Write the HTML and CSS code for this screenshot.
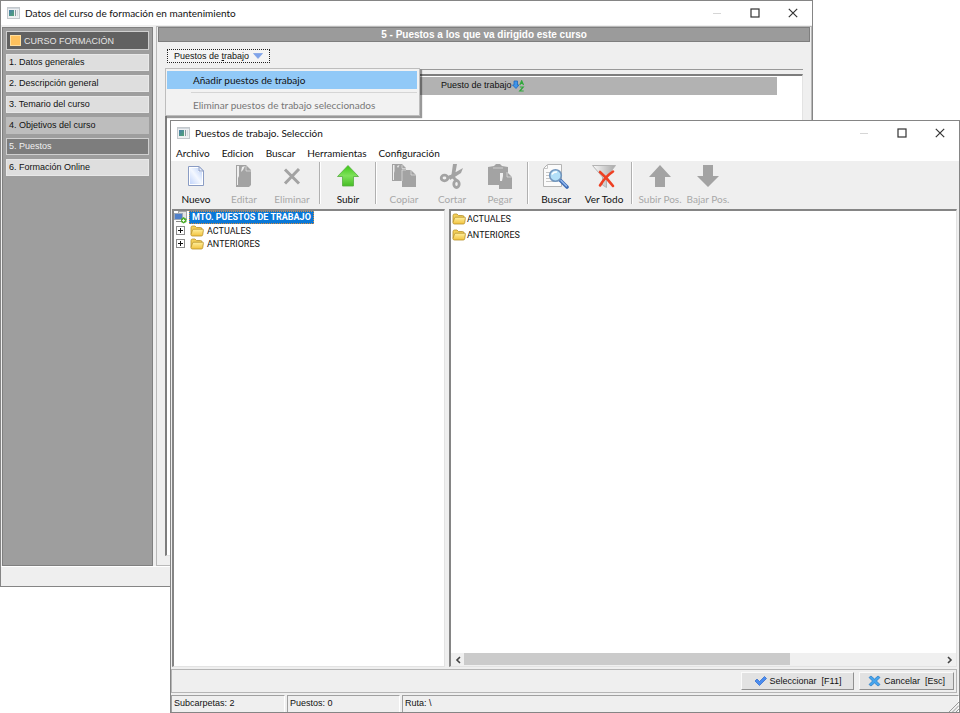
FILE: index.html
```html
<!DOCTYPE html>
<html lang="es">
<head>
    <meta charset="UTF-8">
    <meta name="viewport" content="width=device-width, initial-scale=1.0">
    <title>Datos del curso de formación en mantenimiento</title>
    <link rel="stylesheet" href="styles.css">
</head>
<body>
    <!-- Shared icons -->
    <svg class="defs" width="0" height="0" aria-hidden="true">
        <defs>
            <linearGradient id="folderFill" x1="0" y1="0" x2="0" y2="1">
                <stop offset="0" stop-color="#fff0a0"/>
                <stop offset="1" stop-color="#f2c23c"/>
            </linearGradient>
            <linearGradient id="appFill" x1="0" y1="0" x2="1" y2="1">
                <stop offset="0" stop-color="#4a7fae"/>
                <stop offset="1" stop-color="#4fa372"/>
            </linearGradient>
            <symbol id="app" viewBox="0 0 13 12">
                <rect x="0.5" y="0.5" width="12" height="11" fill="#eef0f2" stroke="#c3c8cc"/>
                <rect x="1" y="1" width="11" height="1" fill="#cfd6dc"/>
                <rect x="2" y="3" width="5" height="6" fill="url(#appFill)"/>
                <rect x="8" y="3" width="1" height="6" fill="#8b979e"/>
                <rect x="10" y="3" width="1" height="6" fill="#d5dade"/>
            </symbol>
            <symbol id="folder" viewBox="0 0 14 12">
                <path d="M1 9.500V2.500Q1 1 2.500 1H5L6.500 2.500H10.500Q12 2.500 12 4V5" fill="#f3cf58" stroke="#b8922c" stroke-width="0.800"/>
                <path d="M1 9.500L2.500 5Q2.800 4.200 3.700 4.200H12.500Q13.600 4.200 13.400 5.200L12.700 9.800Q12.500 11 11.300 11H2.300Q1 11 1 9.500Z" fill="url(#folderFill)" stroke="#b8922c" stroke-width="0.800"/>
            </symbol>
            <symbol id="plus" viewBox="0 0 9 9">
                <rect x="0.500" y="0.500" width="8" height="8" fill="#fff" stroke="#8c8c8c"/>
                <path d="M2 4.500H7M4.500 2V7" stroke="#111"/>
            </symbol>
            <symbol id="minimize" viewBox="0 0 10 10"><path d="M1 5.500H9" stroke="#d6d6d6"/></symbol>
            <symbol id="maximize" viewBox="0 0 10 10"><rect x="1" y="1" width="8" height="8" fill="none" stroke="#333" stroke-width="1.200"/></symbol>
            <symbol id="close" viewBox="0 0 10 10"><path d="M0.800 0.800L9.200 9.200M9.200 0.800L0.800 9.200" stroke="#333" stroke-width="1.200"/></symbol>
        </defs>
    </svg>

    <main class="desktop">
        <section class="window course">
            <header class="title-bar">
                <svg class="app-icon"><use href="#app"/></svg>
                <h1>Datos del curso de formación en mantenimiento</h1>
                <div class="window-buttons">
                    <button aria-label="Minimizar" disabled><svg><use href="#minimize"/></svg></button>
                    <button aria-label="Maximizar"><svg><use href="#maximize"/></svg></button>
                    <button aria-label="Cerrar"><svg><use href="#close"/></svg></button>
                </div>
            </header>

            <div class="course-body">
                <nav class="sidebar">
                    <h2>CURSO FORMACIÓN</h2>
                    <a href="#">1. Datos generales</a>
                    <a href="#">2. Descripción general</a>
                    <a href="#">3. Temario del curso</a>
                    <a href="#" class="hover">4. Objetivos del curso</a>
                    <a href="#" class="active">5. Puestos</a>
                    <a href="#">6. Formación Online</a>
                </nav>

                <div class="panel">
                    <h2 class="panel-title">5 - Puestos a los que va dirigido este curso</h2>
                    <div class="panel-tools">
                        <button class="menu-button">
                            <span>Puestos de <u>t</u>rabajo</span>
                            <svg width="10" height="6" viewBox="0 0 10 6"><path d="M0.500 0.500H9.500L5 5.500Z" fill="#7fa3ea" stroke="#7298e2" stroke-width="0.600"/></svg>
                        </button>
                        <div class="popup" role="menu">
                            <button role="menuitem" class="selected">Añadir puestos de trabajo</button>
                            <hr>
                            <button role="menuitem" disabled>Eliminar puestos de trabajo seleccionados</button>
                        </div>
                    </div>
                    <div class="grid-box">
                        <table>
                            <tr>
                                <th>
                                    Puesto de trabajo
                                    <svg width="13" height="12" viewBox="0 0 13 12">
                                        <path d="M2 1H5.500V5H7L4 8.500L0.500 5H2Z" fill="#3f95ea" stroke="#1f66bd" stroke-width="0.800"/>
                                        <path d="M7.800 5L9.700 0.800L11.500 5M8.300 3.500H11M7.800 7H11.200L7.800 11H11.700" fill="none" stroke="#2fa83a" stroke-width="1.200"/>
                                    </svg>
                                </th>
                            </tr>
                        </table>
                    </div>
                </div>
            </div>
            <footer class="course-footer"></footer>
        </section>

        <section class="window picker">
            <header class="title-bar">
                <svg class="app-icon"><use href="#app"/></svg>
                <h1>Puestos de trabajo. Selección</h1>
                <div class="window-buttons">
                    <button aria-label="Minimizar" disabled><svg><use href="#minimize"/></svg></button>
                    <button aria-label="Maximizar"><svg><use href="#maximize"/></svg></button>
                    <button aria-label="Cerrar"><svg><use href="#close"/></svg></button>
                </div>
            </header>

            <nav class="menu-bar">
                <button>Archivo</button>
                <button>Edicion</button>
                <button>Buscar</button>
                <button>Herramientas</button>
                <button>Configuración</button>
            </nav>

            <div class="toolbar">
                <button>
                    <svg viewBox="0 0 26 26">
                        <defs><linearGradient id="pageFill" x1="1" y1="0" x2="0" y2="1"><stop offset="0" stop-color="#b9cffa"/><stop offset="0.500" stop-color="#f4f8ff"/><stop offset="1" stop-color="#c3d5fb"/></linearGradient></defs>
                        <path d="M5.500 3.500H16L20.500 8V22.500H5.500Z" fill="#fff" stroke="#8a9cc4"/>
                        <path d="M7 5H15.500V9H19V21H7Z" fill="url(#pageFill)"/>
                        <path d="M16 3.500V8H20.500Z" fill="#eaf0fd" stroke="#8a9cc4"/>
                    </svg>
                    Nuevo
                </button>
                <button disabled>
                    <svg viewBox="0 0 26 26">
                        <path d="M5 2H15L20 7V22L18 24H5Z" fill="#a3a3a3"/>
                        <path d="M6 3H8V13L7 15V22H6ZM11 4L14 3L12 7L10 9Z" fill="#efefef"/>
                        <path d="M15 3V8H20" fill="none" stroke="#efefef" stroke-width="0.600"/>
                    </svg>
                    Editar
                </button>
                <button disabled>
                    <svg viewBox="0 0 26 26"><path d="M6 6.500L20 20.500M20 6L6 20.500" fill="none" stroke="#a3a3a3" stroke-width="3"/></svg>
                    Eliminar
                </button>
                <span class="divider"></span>
                <button>
                    <svg viewBox="0 0 26 26">
                        <defs><linearGradient id="upFill" x1="0" y1="0" x2="0" y2="1"><stop offset="0" stop-color="#3cc814"/><stop offset="0.500" stop-color="#7fe25a"/><stop offset="1" stop-color="#46bd25"/></linearGradient></defs>
                        <path d="M13 2.500L23.500 13.500H18.500V23H7.500V13.500H2.500Z" fill="url(#upFill)" stroke="#55ad40" stroke-width="0.800"/>
                    </svg>
                    Subir
                </button>
                <span class="divider"></span>
                <button disabled>
                    <svg viewBox="0 0 26 26">
                        <path d="M1 1H11L15 5V18H1Z" fill="#a3a3a3"/>
                        <path d="M2 2H3.500V8L3 10V17H2ZM6 3L8.500 2L7 5Z" fill="#efefef"/>
                        <path d="M11 7H20L25 12V24H11Z" fill="#a3a3a3"/>
                        <path d="M11 2V5.500H15M20 7V12H25M11 18V7H15" fill="none" stroke="#efefef" stroke-width="0.600"/>
                    </svg>
                    Copiar
                </button>
                <button disabled>
                    <svg viewBox="0 0 26 26">
                        <path d="M14 1L18 1L16 12L12 15ZM24 5L22 10L11 17L10 13Z" fill="#a3a3a3"/>
                        <ellipse cx="5.500" cy="15" rx="3.300" ry="2.800" fill="none" stroke="#a3a3a3" stroke-width="2.800"/>
                        <ellipse cx="17.500" cy="21" rx="2.700" ry="3.500" fill="none" stroke="#a3a3a3" stroke-width="2.800"/>
                        <path d="M8 15L13 13L18 18" fill="none" stroke="#a3a3a3" stroke-width="3"/>
                    </svg>
                    Cortar
                </button>
                <button disabled>
                    <svg viewBox="0 0 26 26">
                        <path d="M1 4L7 3L9 1H13L15 3L21 4V22H1Z" fill="#a3a3a3"/>
                        <path d="M6 5H16" stroke="#efefef" stroke-width="0.600"/>
                        <path d="M12 9H20L25 14V26H12Z" fill="#a3a3a3"/>
                        <path d="M13 10H16V13L15 18H13Z" fill="#efefef"/>
                        <path d="M20 9V14H25" fill="none" stroke="#efefef" stroke-width="0.600"/>
                    </svg>
                    Pegar
                </button>
                <span class="divider"></span>
                <button>
                    <svg viewBox="0 0 26 26">
                        <path d="M4.500 1.500H18.500V23.500H0.500V5.500Z" fill="#fbfbfb" stroke="#b4b4b4"/>
                        <path d="M4.500 1.500V5.500H0.500M3 9.500H8M3 12.500H7M3 15.500H7M3 18.500H12" fill="none" stroke="#c6c6c6"/>
                        <path d="M17.500 17.500L24 24" stroke="#3e6cb5" stroke-width="3.600" stroke-linecap="round"/>
                        <path d="M18 17.500L23.500 23" stroke="#8fb6ec" stroke-width="1.500" stroke-linecap="round"/>
                        <circle cx="12.500" cy="12.500" r="5.800" fill="#b3e0f8" stroke="#7296bd" stroke-width="1.600"/>
                        <path d="M9 11.500Q10.500 8.500 14 9" fill="none" stroke="#fff" stroke-width="1.500"/>
                    </svg>
                    Buscar
                </button>
                <button>
                    <svg viewBox="0 0 26 26">
                        <defs><linearGradient id="funnelFill"><stop offset="0" stop-color="#fafafa"/><stop offset="1" stop-color="#a8a8a8"/></linearGradient></defs>
                        <path d="M1.500 2.500H24.500L15.500 14V24.500L11.500 22V14Z" fill="url(#funnelFill)" stroke="#b4b4b4"/>
                        <path d="M9 9Q16 15 22 23M22 8.500Q14 14 9 22.500" fill="none" stroke="#ee4023" stroke-width="2.600" stroke-linecap="round"/>
                    </svg>
                    Ver Todo
                </button>
                <span class="divider"></span>
                <button disabled>
                    <svg viewBox="0 0 26 26"><path d="M13 2L24 14H18V24H8V14H2Z" fill="#a3a3a3"/></svg>
                    Subir Pos.
                </button>
                <button disabled>
                    <svg viewBox="0 0 26 26"><path d="M13 24L24 13H18V2H8V13H2Z" fill="#a3a3a3"/></svg>
                    Bajar Pos.
                </button>
            </div>

            <div class="panes">
                <ul class="tree">
                    <li>
                        <svg class="root-icon" viewBox="0 0 13 13">
                            <rect x="4.500" y="0.500" width="8" height="8" fill="#e3e3e3" stroke="#a5a5a5"/>
                            <rect x="0.500" y="2.500" width="8" height="6" fill="#4f7fc9" stroke="#9fa9b8"/>
                            <path d="M2 10.500H8" stroke="#8b8b8b"/>
                            <path d="M9.500 6L12.500 8V11L9.500 12.500L7 11V8Z" fill="#4fae2f"/>
                            <path d="M9.500 8V11M8 9.500H11" stroke="#fff" stroke-width="0.800"/>
                        </svg>
                        <strong>MTO. PUESTOS DE TRABAJO</strong>
                    </li>
                    <li><svg class="plus"><use href="#plus"/></svg><svg class="folder"><use href="#folder"/></svg><span>ACTUALES</span></li>
                    <li><svg class="plus"><use href="#plus"/></svg><svg class="folder"><use href="#folder"/></svg><span>ANTERIORES</span></li>
                </ul>
                <div class="list">
                    <ul>
                        <li><svg class="folder"><use href="#folder"/></svg>ACTUALES</li>
                        <li><svg class="folder"><use href="#folder"/></svg>ANTERIORES</li>
                    </ul>
                    <div class="scrollbar">
                        <button aria-label="Izquierda"><svg viewBox="0 0 6 8"><path d="M5 1L2 4L5 7" fill="none" stroke="#444" stroke-width="1.600"/></svg></button>
                        <div class="track"><div class="thumb"></div></div>
                        <button aria-label="Derecha"><svg viewBox="0 0 6 8"><path d="M1 1L4 4L1 7" fill="none" stroke="#444" stroke-width="1.600"/></svg></button>
                    </div>
                </div>
            </div>

            <div class="actions">
                <button class="select">
                    <svg viewBox="0 0 13 12"><path d="M1 6L3 4L5.500 6.500L10.500 1.500L12.500 3.500L5.500 10.500Z" fill="#4a8df0" stroke="#2b64c8" stroke-width="0.700"/></svg>
                    <span>Seleccionar&nbsp; [F11]</span>
                </button>
                <button class="cancel">
                    <svg viewBox="0 0 13 12"><path d="M1 2.500L3 1L6.500 4L10 1L12 2.500L8.500 6L12 9.500L10 11L6.500 8L3 11L1 9.500L4.500 6Z" fill="#45a5ee" stroke="#2477c2" stroke-width="0.700"/></svg>
                    <span>Cancelar&nbsp; [Esc]</span>
                </button>
            </div>

            <footer class="status-bar">
                <span>Subcarpetas: 2</span>
                <span>Puestos: 0</span>
                <span>Ruta: \</span>
                <svg class="grip" width="10" height="10" viewBox="0 0 10 10"><path d="M0 10L10 0M3.500 10L10 3.500M7 10L10 7" stroke="#9a9a9a"/></svg>
            </footer>
        </section>
    </main>
</body>
</html>
```
FILE: styles.css
```css
* {
    box-sizing: border-box;
}

body {
    margin: 0;
    font-family: "Liberation Sans", Arial, sans-serif;
    font-size: 9px;
    color: #111;
    background-color: #fff;
}

button {
    margin: 0;
    padding: 0;
    border: none;
    background: none;
    font: inherit;
    color: inherit;
}

h1, h2, ul {
    margin: 0;
    padding: 0;
    font-weight: normal;
    list-style: none;
}

svg {
    display: block;
    flex: none;
}

.defs {
    position: absolute;
}

.desktop {
    position: relative;
    height: 100vh;
    min-height: 400px;
    overflow: hidden;
}

/* Windows */
.window {
    position: absolute;
    display: flex;
    flex-direction: column;
    border: 1px solid #858585;
    background-color: #efefef;
}

.course {
    top: 0;
    left: 0;
    right: 147px;
    bottom: 126px;
}

.picker {
    top: 120px;
    left: 170px;
    right: 0;
    bottom: 0;
}

.title-bar {
    display: flex;
    align-items: center;
    flex: none;
    height: 24px;
    padding: 0 8px 0 6px;
    background-color: #fff;
}

.title-bar h1 {
    flex: 1;
    margin-left: 5px;
    font-family: Lato, sans-serif;
    font-size: 10px;
}

.app-icon {
    width: 13px;
    height: 12px;
}

.window-buttons {
    display: flex;
}

.window-buttons button {
    display: flex;
    align-items: center;
    justify-content: center;
    width: 38px;
    height: 24px;
}

.window-buttons button:last-child {
    justify-content: flex-end;
    width: 24px;
    margin-right: 6px;
}

.window-buttons svg {
    width: 10px;
    height: 10px;
}

/* Course window */
.course-body {
    display: flex;
    flex: 1;
    gap: 3px;
    min-height: 0;
    padding: 1px 0 0 1px;
}

.sidebar {
    display: flex;
    flex-direction: column;
    gap: 4px;
    width: 151px;
    margin-top: 1px;
    padding: 3px;
    border: 1px solid #808080;
    background-color: #9e9e9e;
}

.sidebar h2 {
    display: flex;
    align-items: center;
    height: 19px;
    padding-left: 3px;
    border: 1px solid #cfcfcf;
    background-color: #616161;
    color: #e6e6e6;
    font-size: 9px;
}

.sidebar h2::before {
    content: "";
    width: 9px;
    height: 9px;
    margin-right: 3px;
    background-color: #ffc25e;
    border: 1px solid #ffdf9e;
}

.sidebar a {
    height: 17px;
    padding-left: 2px;
    border: 1px solid #e8e8e8;
    background-color: #dedede;
    color: #111;
    line-height: 15px;
    text-decoration: none;
}

.sidebar a.hover {
    background-color: #bdbdbd;
    border-color: #bdbdbd;
}

.sidebar a.active {
    background-color: #7d7d7d;
    border-color: #d0d0d0;
    color: #f0f0f0;
}

.panel {
    display: flex;
    flex: 1;
    flex-direction: column;
    padding: 0 1px 1px;
    border: 1px solid #b9b9b9;
}

.panel-title {
    height: 15px;
    border: 1px solid #7e7e7e;
    background-color: #9b9b9b;
    color: #fff;
    font-size: 10px;
    font-weight: bold;
    line-height: 13px;
    text-align: center;
}

.panel-tools {
    position: relative;
    height: 28px;
    margin: 0 7px;
    padding: 7px 2px 0;
    border-bottom: 1px solid #999;
}

.menu-button {
    display: flex;
    align-items: center;
    gap: 4px;
    height: 14px;
    padding: 0 6px;
    border: 1px dotted #222;
    background-color: #f5f5f5;
}

.popup {
    position: absolute;
    top: 26px;
    left: 0;
    z-index: 1;
    width: 255px;
    padding: 2px 2px 1px 1px;
    border: 1px solid #bdbdbd;
    background-color: #f2f2f2;
    box-shadow: 2px 2px 1px rgba(0, 0, 0, 0.4);
    font-family: Lato, sans-serif;
    font-size: 10px;
}

.popup button {
    display: block;
    width: 100%;
    height: 18px;
    padding-left: 26px;
    text-align: left;
}

.popup button.selected {
    background-color: #91c9f7;
}

.popup button:disabled {
    color: #777;
}

.popup hr {
    margin: 3px 0 3px 24px;
    border: none;
    border-top: 1px solid #d5d5d5;
}

.grid-box {
    flex: 1;
    margin: 4px 7px 8px;
    padding-top: 1px;
    border: 1px solid #e3e3e3;
    border-top: 2px solid #7d7d7d;
    border-left: 2px solid #7d7d7d;
    background-color: #fff;
}

.grid-box table {
    width: calc(100% - 25px);
    border-collapse: collapse;
}

.grid-box th {
    height: 18px;
    padding: 0 0 0 274px;
    background-color: #b2b2b2;
    font-weight: normal;
    text-align: left;
}

.grid-box th svg {
    display: inline-block;
    margin-left: -2px;
    vertical-align: middle;
}

.course-footer {
    height: 20px;
    border-top: 1px solid #fff;
}

/* Selection window */
.menu-bar {
    display: flex;
    flex: none;
    gap: 12px;
    height: 16px;
    padding-left: 5px;
    background-color: #fff;
    font-family: Lato, sans-serif;
    font-size: 10px;
}

.toolbar {
    display: flex;
    flex: none;
    height: 48px;
    padding: 1px 0 0 1px;
}

.toolbar button {
    display: flex;
    flex-direction: column;
    align-items: center;
    gap: 3px;
    width: 48px;
    padding-top: 1px;
    font-family: Lato, sans-serif;
    font-size: 10px;
    line-height: 14px;
    white-space: nowrap;
}

.toolbar button:disabled {
    color: #a8a8a8;
}

.toolbar svg {
    width: 26px;
    height: 26px;
}

.divider {
    width: 2px;
    height: 42px;
    margin: 0 3px;
    border-left: 1px solid #b0b0b0;
    border-right: 1px solid #fff;
}

.panes {
    display: flex;
    flex: 1;
    gap: 4px;
    min-height: 0;
    padding: 0 2px 0 1px;
    font-family: Roboto, sans-serif;
}

.tree,
.list {
    border: 1px solid #e3e3e3;
    border-top: 2px solid #858585;
    border-left: 2px solid #858585;
    background-color: #fff;
}

.tree {
    width: 273px;
}

.tree li {
    display: flex;
    align-items: center;
    height: 13px;
}

.tree strong {
    margin-left: 2px;
    padding: 0 2px;
    border: 1px dotted #d98b3a;
    background-color: #0a78d7;
    color: #fff;
    font-size: 9px;
    line-height: 11px;
}

.root-icon {
    width: 13px;
    height: 13px;
}

.plus {
    width: 9px;
    height: 9px;
    margin: 0 5px 0 2px;
}

.folder {
    width: 14px;
    height: 12px;
}

.tree .folder {
    margin-right: 3px;
}

.list {
    display: flex;
    flex: 1;
    flex-direction: column;
}

.list ul {
    flex: 1;
}

.list li {
    display: flex;
    align-items: center;
    gap: 1px;
    height: 16px;
    padding-left: 1px;
}

.scrollbar {
    display: flex;
    height: 13px;
    background-color: #f0f0f0;
}

.scrollbar button {
    display: flex;
    align-items: center;
    justify-content: center;
    width: 13px;
}

.scrollbar svg {
    width: 6px;
    height: 8px;
}

.track {
    flex: 1;
}

.thumb {
    width: 68%;
    height: 12px;
    background-color: #cbcbcb;
}

.actions {
    display: flex;
    flex: none;
    justify-content: flex-end;
    gap: 5px;
    height: 24px;
    margin: 2px 2px 2px 0;
    padding: 2px;
    border: 1px solid #b5b5b5;
}

.actions button {
    display: flex;
    align-items: center;
    justify-content: center;
    gap: 3px;
    height: 18px;
    border: 1px solid #fafafa;
    border-right-color: #909090;
    border-bottom-color: #909090;
    background-color: #e2e2e2;
}

.actions svg {
    width: 13px;
    height: 12px;
}

.actions .select {
    width: 113px;
}

.actions .cancel {
    width: 95px;
}

.status-bar {
    position: relative;
    display: grid;
    flex: none;
    grid-template-columns: 114px 113px 1fr;
    gap: 2px;
    height: 17px;
}

.status-bar span {
    padding-left: 2px;
    border-top: 1px solid #a0a0a0;
    border-left: 1px solid #a0a0a0;
    border-right: 1px solid #fff;
    line-height: 15px;
}

.grip {
    position: absolute;
    right: 0;
    bottom: 0;
}
```
